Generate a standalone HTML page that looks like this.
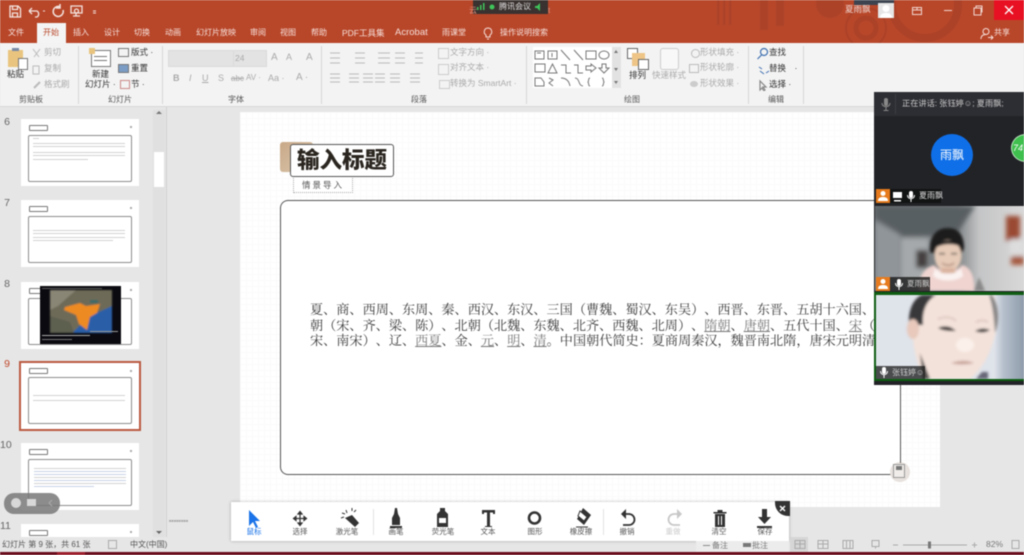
<!DOCTYPE html>
<html><head><meta charset="utf-8"><style>
html,body{margin:0;padding:0;width:1024px;height:555px;overflow:hidden;background:#e6e6e6}
body{font-family:"Liberation Sans","Noto Sans CJK SC",sans-serif;color:#444}
#w{position:absolute;left:0;top:0;width:1024px;height:555px;overflow:hidden;filter:blur(.4px);background:#e6e6e6}
.a{position:absolute}
.t{position:absolute;white-space:nowrap;font-size:8.5px;line-height:11px;color:#555}
.tab{position:absolute;top:27px;white-space:nowrap;font-size:8px;line-height:12px;color:#f6ded8}
.g{color:#aaa}
.grp{position:absolute;top:95px;font-size:8px;line-height:10px;color:#555;white-space:nowrap}
.sep{position:absolute;top:46px;height:58px;width:1px;background:#d6d6d6}
.th{position:absolute;left:21px;width:118px;height:67px;background:#fff}
.th i{position:absolute;left:8px;top:6px;width:19px;height:6px;border:1px solid #777;border-radius:1px;box-sizing:border-box}
.th b{position:absolute;left:7px;top:16px;width:104px;height:47px;border:1px solid #8c8c8c;border-radius:2px;box-sizing:border-box}
.th u{position:absolute;right:7px;top:7px;width:2px;height:2px;background:#aaa}
.num{position:absolute;left:0;width:10px;text-align:right;font-size:10.5px;color:#666}
.ln{position:absolute;height:1px;background:#d2d2d2}
.tl{position:absolute;top:527px;font-size:7.5px;line-height:10px;color:#555;transform:translateX(-50%);white-space:nowrap}
.body{font-family:"Liberation Serif","Noto Serif CJK SC",serif;font-size:13.15px;line-height:15.5px;color:#3a3a3a;white-space:nowrap;text-spacing-trim:space-all}
.body span{text-decoration:underline;color:#777}
</style></head><body><div id="w">
<!-- title bar -->
<div class="a" style="left:0;top:0;width:1024px;height:43px;background:#b8472a"></div>
<svg class="a" style="left:700px;top:0" width="324" height="43">
<g fill="none" stroke="#ac4228"><circle cx="225" cy="5" r="33" stroke-width="8"/><circle cx="166" cy="28" r="10" stroke-width="5"/><circle cx="166" cy="28" r="20" stroke-width="2"/></g>
<g fill="#ac4329"><rect x="17" y="0" width="2.500" height="25"/><rect x="23" y="0" width="2.500" height="25"/><rect x="29" y="0" width="2.500" height="25"/><rect x="60" y="0" width="8" height="30"/><rect x="76" y="0" width="8" height="26"/><circle cx="130" cy="4" r="14"/></g>
<rect x="154" y="0" width="40" height="5" fill="#3d4450"/>
</svg>
<svg class="a" style="left:0;top:0" width="110" height="22" fill="none" stroke="#f4e4df" stroke-width="1.300">
<path d="M10 6h8l2.500 2.500V17H10zM12.500 6v3.500h5V6M12.500 17v-4h5v4"/>
<path d="M29 11h8a3.500 3.500 0 0 1 0 6h-2M29 11l3-3M29 11l3 3"/>
<path d="M43 11h2" stroke-width="1"/>
<path d="M60.500 7a5 5 0 1 0 2.500 3M60 4v4h-4" stroke-width="1.500"/>
<path d="M71 6h11v7H71zM76 13v3M73 16h7"/><circle cx="76.500" cy="11" r="2"/>
<path d="M93 11h3M93 13h3" stroke-width="1"/></svg>
<div class="a" style="left:473px;top:0;width:75px;height:14px;background:#3a3230"></div>
<svg class="a" style="left:476px;top:1px" width="72" height="12"><g fill="#3fc45a"><rect x="1" y="6" width="1.500" height="3"/><rect x="4" y="4" width="1.500" height="5"/><rect x="7" y="2" width="1.500" height="7"/><circle cx="16" cy="6" r="2.500"/><path d="M59 5h2l3-3v8l-3-3h-2z"/></g></svg>
<div class="t" style="left:499px;top:1px;color:#ddd;font-size:8px">腾讯会议</div>
<div class="t" style="left:548px;top:5px;color:#d98f7c;font-size:8px">t</div>
<div class="t" style="left:469px;top:5px;color:#d98f7c;font-size:8px">云</div>
<div class="t" style="left:845px;top:4px;color:#f0d8d2;font-size:8.5px">夏雨飘</div>
<div class="a" style="left:878px;top:3px;width:16px;height:15px;background:#e6e6e6"></div>
<svg class="a" style="left:878px;top:3px" width="16" height="15"><circle cx="8" cy="5.500" r="3.500" fill="#fff"/><path d="M2 15c0-4 3-5 6-5s6 1 6 5z" fill="#fff"/></svg>
<svg class="a" style="left:905px;top:0" width="119" height="22" fill="none" stroke="#f0d6ce"><path d="M7.500 7.500h9v7h-9zM7.500 10h9M12 7.500V10"/><path d="M39 10.500h8"/><path d="M69 8h7v7h-7zM71 8V6h6v6h-1"/></svg>
<div class="a" style="left:994px;top:0;width:30px;height:20px;background:#e81123"></div>
<svg class="a" style="left:994px;top:0" width="30" height="20" stroke="#fff" stroke-width="1.300"><path d="M11 6l8 8M19 6l-8 8"/></svg>
<!-- tabs -->
<div class="a" style="left:37px;top:23px;width:29px;height:21px;background:#f4f4f4"></div>
<div class="tab" style="left:8px">文件</div>
<div class="tab" style="left:43px;color:#b8472a">开始</div>
<div class="tab" style="left:73px">插入</div>
<div class="tab" style="left:104px">设计</div>
<div class="tab" style="left:134px">切换</div>
<div class="tab" style="left:165px">动画</div>
<div class="tab" style="left:196px">幻灯片放映</div>
<div class="tab" style="left:250px">审阅</div>
<div class="tab" style="left:280px">视图</div>
<div class="tab" style="left:311px">帮助</div>
<div class="tab" style="left:342px;font-size:8.500px">PDF工具集</div>
<div class="tab" style="left:395px;font-size:9.500px">Acrobat</div>
<div class="tab" style="left:442px">雨课堂</div>
<svg class="a" style="left:482px;top:27px" width="12" height="13" fill="none" stroke="#f6ded8"><path d="M6 1a3.800 3.800 0 0 0-2 7v2h4V8a3.800 3.800 0 0 0-2-7zM5 12h2"/></svg>
<div class="tab" style="left:500px">操作说明搜索</div>
<svg class="a" style="left:980px;top:27px" width="14" height="13" fill="none" stroke="#f6ded8"><circle cx="6" cy="4.500" r="3"/><path d="M1 12c0-3 2-4.500 5-4.500M8 10.500h5M11 8.500l2 2-2 2"/></svg>
<div class="tab" style="left:994px">共享</div>
<!-- ribbon -->
<div class="a" style="left:0;top:43px;width:1024px;height:63px;background:#f3f3f3"></div>
<div class="a" style="left:0;top:106px;width:1024px;height:1px;background:#d8d8d8"></div>
<div class="sep" style="left:78px"></div><div class="sep" style="left:162px"></div><div class="sep" style="left:321px"></div><div class="sep" style="left:526px"></div><div class="sep" style="left:748px"></div><div class="sep" style="left:803px"></div>
<div class="grp" style="left:19px">剪贴板</div><div class="grp" style="left:108px">幻灯片</div><div class="grp" style="left:228px">字体</div><div class="grp" style="left:411px">段落</div><div class="grp" style="left:624px">绘图</div><div class="grp" style="left:768px">编辑</div>
<!-- clipboard -->
<div class="a" style="left:8px;top:50px;width:15px;height:17px;background:#e8c47e"></div><div class="a" style="left:12px;top:48px;width:7px;height:3px;background:#7a8aa5"></div><div class="a" style="left:18px;top:58px;width:8px;height:10px;background:#fff;border:1px solid #777"></div>
<div class="t" style="left:7px;top:69px;color:#333">粘贴</div>
<div class="t g" style="left:44px;top:47px">剪切</div><div class="t g" style="left:44px;top:63px">复制</div><div class="t g" style="left:44px;top:79px">格式刷</div>
<svg class="a" style="left:31px;top:48px" width="12" height="42" fill="none" stroke="#bbb"><path d="M2 1l6 8M9 1l-6 8M2 18h6v8H2z"/><path d="M3 40l6-6" stroke-width="2"/></svg>
<!-- slides -->
<div class="a" style="left:91px;top:50px;width:18px;height:15px;background:#fff;border:1px solid #777"></div><div class="ln" style="left:94px;top:56px;width:13px;background:#777"></div><div class="ln" style="left:94px;top:60px;width:13px;background:#777"></div><div class="a" style="left:89px;top:48px;width:6px;height:6px;background:#e8c47e"></div>
<div class="t" style="left:92px;top:69px;color:#333">新建</div><div class="t" style="left:85px;top:79px;color:#333">幻灯片 ·</div>
<div class="a" style="left:118px;top:48px;width:9px;height:7px;border:1px solid #777"></div><div class="t" style="left:131px;top:47px;color:#333">版式 ·</div>
<div class="a" style="left:118px;top:64px;width:9px;height:7px;border:1px solid #777;background:#7a9cc5"></div><div class="t" style="left:131px;top:63px;color:#333">重置</div>
<div class="a" style="left:120px;top:80px;width:8px;height:7px;border:1px solid #c88"></div><div class="t" style="left:131px;top:79px;color:#333">节 ·</div>
<!-- font -->
<div class="a" style="left:168px;top:50px;width:64px;height:15px;background:#e3e3e3;border:1px solid #dadada"></div><div class="a" style="left:233px;top:50px;width:32px;height:15px;background:#e3e3e3;border:1px solid #dadada"></div>
<div class="t g" style="left:235px;top:53px">24</div>
<div class="t g" style="left:271px;top:52px;font-size:10px">A</div><div class="t g" style="left:286px;top:52px;font-size:9px">A</div><div class="t g" style="left:306px;top:52px;font-size:10px">A</div>
<div class="t g" style="left:173px;top:73px;font-size:9px;font-weight:bold">B</div><div class="t g" style="left:189px;top:73px;font-size:9px;font-style:italic">I</div><div class="t g" style="left:202px;top:73px;font-size:9px;text-decoration:underline">U</div><div class="t g" style="left:218px;top:73px;font-size:9px">S</div><div class="t g" style="left:231px;top:73px;font-size:8px;text-decoration:line-through">abc</div><div class="t g" style="left:246px;top:72px;font-size:8px">AV ·</div><div class="t g" style="left:268px;top:73px;font-size:9px">Aa ·</div><div class="t g" style="left:296px;top:72px;font-size:10px">A ·</div>
<svg class="a" style="left:328px;top:50px" width="100" height="36" stroke="#bbb" fill="none"><path d="M2 3h10M2 8h10M2 13h10M27 3h10M27 8h10M27 13h10M50 3h12M50 8h12M50 13h12M67 3h10M67 8h10M67 13h10M87 3h8M87 8h8M87 13h8M2 24h10M2 28h10M2 32h10M21 24h10M21 28h10M21 32h10M35 24h10M35 28h10M35 32h10M47 24h10M47 28h10M47 32h10M62 24h10M62 28h10M62 32h10M82 24h10M82 28h10M82 32h10"/></svg>
<div class="t g" style="left:450px;top:47px">文字方向 ·</div><div class="t g" style="left:450px;top:62px">对齐文本 ·</div><div class="t g" style="left:450px;top:78px">转换为 SmartArt ·</div>
<div class="a" style="left:438px;top:48px;width:9px;height:9px;border:1px solid #ccc"></div><div class="a" style="left:438px;top:64px;width:9px;height:9px;border:1px solid #ccc"></div><div class="a" style="left:439px;top:80px;width:9px;height:7px;border:1px solid #ccc"></div>
<!-- shapes -->
<div class="a" style="left:533px;top:47px;width:79px;height:41px;background:#fff"></div><div class="a" style="left:612px;top:47px;width:9px;height:41px;background:#e2e2e2"></div>
<svg class="a" style="left:534px;top:47px" width="88" height="41" fill="none" stroke="#777"><path d="M1 4h9v8H1zM3 6h4M14 4h9v8h-9zM18 6v4M27 3l9 10M40 3l9 10M52 4h10v8H52z"/><ellipse cx="70" cy="8" rx="5" ry="4"/><path d="M1 17h10v8H1zM14 26l4.500-9 4.500 9zM27 18h5v8h5M40 18h4v8h5M52 19h5v-2l5 4-5 4v-2h-5zM68 17h4v4h3l-5 5-5-5h3zM1 31h6l3 4v4H1zM15 31l4 2-4 3 4 3M27 31c5 0 8 3 9 8M41 31c5 0 3 8 8 8M56 31c-2 0-1 3-2 4 1 1 0 4 2 4M68 31c2 0 1 3 2 4-1 1 0 4-2 4"/><path d="M80 6h4l-2-3zM80 21h4l-2 3zM80 34h4l-2 3z" fill="#777" stroke="none"/></svg>
<div class="a" style="left:627px;top:48px;width:9px;height:9px;border:1px solid #666;background:#fff"></div><div class="a" style="left:632px;top:53px;width:13px;height:13px;background:#eec587"></div><div class="a" style="left:638px;top:59px;width:9px;height:9px;border:1px solid #666;background:#fff"></div>
<div class="t" style="left:629px;top:70px;color:#333">排列</div>
<div class="a" style="left:660px;top:48px;width:17px;height:20px;border:1px solid #ccc;border-radius:3px;background:#f8f8f8"></div><div class="t g" style="left:652px;top:70px">快速样式</div>
<div class="t g" style="left:700px;top:47px">形状填充 ·</div><div class="t g" style="left:700px;top:62px">形状轮廓 ·</div><div class="t g" style="left:700px;top:78px">形状效果 ·</div>
<div class="a" style="left:691px;top:49px;width:7px;height:7px;border:1px solid #bbb;border-radius:50%"></div><div class="a" style="left:689px;top:64px;width:8px;height:7px;border:1px solid #bbb"></div><div class="a" style="left:690px;top:81px;width:8px;height:6px;background:#ccc;border-radius:50%"></div>
<!-- edit -->
<svg class="a" style="left:756px;top:47px" width="14" height="44" fill="none" stroke="#3f6fb0" stroke-width="1.200"><circle cx="8" cy="5" r="3.500"/><path d="M5.500 8l-4 4"/><path d="M3 20l3 2M10 26l3-2M4 24l4 3" stroke-width="1"/><path d="M4 34v9l2-2 2 3 1-1-2-3h3z" stroke="#888"/></svg>
<div class="t" style="left:769px;top:47px;color:#333">查找</div><div class="t" style="left:769px;top:63px;color:#333">替换　·</div><div class="t" style="left:769px;top:79px;color:#333">选择 ·</div>
<!-- left pane -->
<div class="a" style="left:166px;top:107px;width:1px;height:430px;background:#d0d0d0"></div>
<div class="a" style="left:153px;top:110px;width:12px;height:427px;background:#e0e0e0"></div>
<div class="a" style="left:154px;top:152px;width:10px;height:35px;background:#fff"></div>
<div class="a" style="left:156px;top:111px;border:3px solid transparent;border-bottom:3px solid #777;border-top:0"></div>
<div class="a" style="left:156px;top:531px;border:3px solid transparent;border-top:3px solid #666;border-bottom:0"></div>
<div class="num" style="top:116px">6</div><div class="num" style="top:197px">7</div><div class="num" style="top:278px">8</div><div class="num" style="top:358px;color:#c0492b">9</div><div class="num" style="top:439px">10</div><div class="num" style="top:520px">11</div>
<div class="th" style="top:119px"><i></i><b></b><u></u>
<div class="ln" style="left:12px;top:19px;width:6px"></div><div class="ln" style="left:12px;top:24px;width:92px"></div><div class="ln" style="left:12px;top:27px;width:92px"></div><div class="ln" style="left:12px;top:33px;width:92px"></div><div class="ln" style="left:12px;top:36px;width:92px"></div><div class="ln" style="left:12px;top:40px;width:55px"></div></div>
<div class="th" style="top:200px"><i></i><b></b><u></u>
<div class="ln" style="left:12px;top:30px;width:92px"></div><div class="ln" style="left:12px;top:33px;width:92px"></div><div class="ln" style="left:12px;top:37px;width:92px"></div><div class="ln" style="left:12px;top:40px;width:80px"></div></div>
<div class="th" style="top:282px"><i></i><b></b><u></u></div>
<svg class="a" style="left:40px;top:286px" width="81" height="58"><defs><filter id="bl"><feGaussianBlur stdDeviation="0.800"/></filter></defs><rect width="81" height="58" fill="#0a0a10"/><g filter="url(#bl)"><rect x="10" y="4" width="62" height="43" fill="#6e6b58"/><path d="M10 4h26L18 20l-8 4z" fill="#8a8676"/><path d="M32 47L50 30l22-10v27z" fill="#2c5ea8"/><path d="M10 30l20 6 4 11H10z" fill="#5d5f50"/><path d="M25 21l15-4 6 3 14-2-3 9-7 4-3 13-8-6-3-9-12-5z" fill="#ee8a22"/><rect x="50" y="14" width="8" height="3" fill="#3d6a66"/></g><rect x="2" y="49" width="48" height="1" fill="#aaa"/><rect x="2" y="53" width="30" height="1" fill="#777"/><rect x="50" y="45" width="28" height="1" fill="#999"/><rect x="2" y="2" width="60" height="1" fill="#555"/></svg>
<div class="th" style="top:363px;height:66px;outline:2px solid #bb5a42"><i style="top:5px"></i><b style="top:14px"></b><u></u>
<div class="ln" style="left:12px;top:32px;width:92px"></div><div class="ln" style="left:12px;top:37px;width:92px"></div></div>
<div class="th" style="top:443px"><i></i><b></b><u></u>
<div class="ln" style="left:13px;top:25px;width:92px"></div><div class="ln" style="left:13px;top:28px;width:92px;background:#c8d2e6"></div><div class="ln" style="left:13px;top:31px;width:92px;background:#c8d2e6"></div><div class="ln" style="left:13px;top:34px;width:92px"></div><div class="ln" style="left:13px;top:37px;width:92px;background:#c8d2e6"></div><div class="ln" style="left:13px;top:40px;width:92px"></div><div class="ln" style="left:13px;top:43px;width:60px;background:#c8d2e6"></div></div>
<div class="th" style="top:524px;height:13px"><i></i><u></u></div>
<div class="a" style="left:4px;top:493px;width:56px;height:21px;background:rgba(120,120,120,.85);border-radius:10px"></div>
<svg class="a" style="left:4px;top:493px" width="56" height="21"><circle cx="12" cy="10" r="5" fill="#d8d8d8"/><rect x="23" y="6" width="9" height="7" fill="#d8d8d8"/><path d="M48 7l-3 3 3 3" stroke="#aaa" fill="none"/></svg>
<!-- slide -->
<div class="a" style="left:240px;top:112px;width:700px;height:395px;background:#fff;background-image:linear-gradient(#fafafa 1px,transparent 1px),linear-gradient(90deg,#fafafa 1px,transparent 1px);background-size:6px 6px;overflow:hidden"></div>
<div class="a" style="left:280px;top:142px;width:33px;height:30px;background:linear-gradient(135deg,#c8a988,#dcc6ac);border-radius:3px"></div>
<div class="a" style="left:293px;top:176px;width:60px;height:17px;background:#fff;border:1px dotted #aaa;box-sizing:border-box;text-align:center;font-size:8.5px;line-height:16px;letter-spacing:2px;color:#555">情景导入</div>
<div class="a" style="left:290px;top:144px;width:104px;height:33px;background:#fff;border:1px solid #555;border-radius:3px;box-sizing:border-box;text-align:center;font-size:22.500px;line-height:31px;font-weight:900;color:#2b2620;font-family:'Liberation Sans','Noto Sans CJK SC',sans-serif">输入标题</div>
<div class="a" style="left:280px;top:200px;width:621px;height:275px;background:#fff;border:1.500px solid #555;border-radius:8px;box-sizing:border-box"></div>
<div class="a body" style="left:310px;top:302px;width:564px;overflow:hidden">夏、商、西周、东周、秦、西汉、东汉、三国（曹魏、蜀汉、东吴）、西晋、东晋、五胡十六国、<br>朝（宋、齐、梁、陈）、北朝（北魏、东魏、北齐、西魏、北周）、<span>隋朝</span>、<span>唐朝</span>、五代十国、<span>宋</span>（<br>宋、南宋）、辽、<span>西夏</span>、金、<span>元</span>、<span>明</span>、<span>清</span>。中国朝代简史：夏商周秦汉，魏晋南北隋，唐宋元明清</div>
<div class="a" style="left:890px;top:462px;width:20px;height:20px;background:#e8e2de;border-radius:50%"></div>
<div class="a" style="left:893px;top:464px;width:12px;height:14px;background:#efece9;border:1px solid #999;box-sizing:border-box"></div>
<div class="a" style="left:896px;top:466px;width:6px;height:4px;background:#777"></div>
<div class="a" style="left:169px;top:518px;font-size:4px;color:#aaa;line-height:5px">■■■■■■■■</div>
<!-- toolbar -->
<div class="a" style="left:231px;top:502px;width:558px;height:39px;background:#fff;box-shadow:0 0 3px rgba(0,0,0,.3)"></div>
<div class="a" style="left:373px;top:509px;width:1px;height:26px;background:#e2e2e2"></div><div class="a" style="left:603px;top:509px;width:1px;height:26px;background:#e2e2e2"></div>
<svg class="a" style="left:231px;top:502px" width="558" height="28">
<path d="M18 8v16l4-4 3 6 2-1-3-6h5z" fill="#1a73e8"/>
<g stroke="#333" fill="#333" stroke-width="1.200"><path d="M69 11v11M64 16.500h11"/><path d="M69 9.500l-2 2.500h4zM69 23.500l-2-2.500h4zM62.500 16.500l2.500-2v4zM75.500 16.500l-2.500-2v4z"/></g>
<path d="M114 16l7-3 7 8-4 4z" fill="#333"/><path d="M115 8l1 3M111 11l3 1M121 6v3M125 8l-2 2M110 16l3-1" stroke="#333"/>
<path d="M164 6h2l1 6 2 4v7h-8v-7l2-4z" fill="#333"/><rect x="159" y="24" width="12" height="2" fill="#333"/>
<path d="M209 6h5v3l3 3v13h-11V12l3-3z" fill="#333"/><rect x="208" y="16" width="7" height="5" fill="#fff"/>
<path d="M251 8h13v4h-2v-1.500h-3V24h2v1h-7v-1h2V10.500h-3V12h-2z" fill="#333"/>
<circle cx="303.500" cy="16" r="5.500" fill="none" stroke="#333" stroke-width="2.600"/>
<path d="M352 6l8 7-7 10-7-6z" fill="#333"/><path d="M349 9l7 6-3 4-6-5z" fill="#fff" stroke="#333"/><path d="M345 25h12" stroke="#333"/>
<path d="M392 12h6a5 5 0 0 1 0 11h-6" fill="none" stroke="#333" stroke-width="1.800"/><path d="M395 7l-5 5 5 5z" fill="#333"/>
<path d="M449 12h-6a5 5 0 0 0 0 11h6" fill="none" stroke="#c8c8c8" stroke-width="1.800"/><path d="M446 7l5 5-5 5z" fill="#c8c8c8"/>
<path d="M484 12h10v13h-10zM482.500 10h13v1.500h-13zM486.500 8h5v2h-5z" fill="#333"/><path d="M487.500 14v9M490.500 14v9" stroke="#fff"/>
<path d="M531 7h5v8h4l-6.500 7-6.500-7h4zM526 24h15v2h-15z" fill="#333"/>
</svg>
<div class="tl" style="left:254px;color:#1a73e8">鼠标</div><div class="tl" style="left:300px">选择</div><div class="tl" style="left:347px">激光笔</div><div class="tl" style="left:396px">画笔</div><div class="tl" style="left:443px">荧光笔</div><div class="tl" style="left:488px">文本</div><div class="tl" style="left:535px">图形</div><div class="tl" style="left:581px">橡皮擦</div><div class="tl" style="left:627px">撤销</div><div class="tl" style="left:673px;color:#ccc">重做</div><div class="tl" style="left:719px">清空</div><div class="tl" style="left:765px">保存</div>
<svg class="a" style="left:775px;top:501px" width="15" height="15"><path d="M0 0h15v15H13A13 13 0 0 1 0 2z" fill="#333"/><path d="M5 5l5 5M10 5l-5 5" stroke="#fff" stroke-width="1.400"/></svg>
<!-- status -->
<div class="a" style="left:0;top:552px;width:1024px;height:3px;background:#6b0c1c"></div>
<div class="a" style="left:57px;top:552px;width:28px;height:3px;background:#9c1e2c"></div>
<div class="a" style="left:696px;top:541px;width:93px;height:11px;background:#ececec"></div>
<div class="t" style="left:2px;top:539px;font-size:8px">幻灯片 第 9 张，共 61 张</div>
<div class="t" style="left:130px;top:539px;font-size:8px">中文(中国)</div>
<div class="a" style="left:108px;top:540px;width:7px;height:7px;border:1px solid #aaa"></div>
<div class="t" style="left:712px;top:540px;font-size:8px;color:#777">备注</div><div class="t" style="left:752px;top:540px;font-size:8px;color:#777">批注</div>
<div class="a" style="left:703px;top:545px;width:7px;height:1px;background:#888"></div><div class="a" style="left:743px;top:543px;width:8px;height:4px;background:#777"></div>
<div class="a" style="left:790px;top:537px;width:18px;height:15px;background:#d6d6d6"></div>
<svg class="a" style="left:790px;top:539px" width="234" height="12" fill="none" stroke="#aaa"><path d="M5 1.500h10v8H5zM5 5h10M10 1.500v8M28 1.500h10v8H28zM28 5h10M33 1.500v8M53 1.500h10v8H53zM56.500 1.500v8M60 1.500v8M82 1.500h7v6H82zM85.500 7.500v2"/><path d="M103 6h5M113 6h64M182 6h5M184.500 3.500v5" stroke-width="1"/><rect x="138" y="2.500" width="3" height="7" fill="#777" stroke="none"/><rect x="222" y="1.500" width="7" height="8"/></svg>
<div class="t" style="left:986px;top:539px;font-size:8.5px;color:#777">82%</div>
<!-- meeting panel -->
<div class="a" style="left:874px;top:92px;width:150px;height:293px;background:#222327;overflow:hidden">
<div class="a" style="left:0;top:0;width:150px;height:24px;background:#2d2e33"></div>
<div class="a" style="left:21px;top:2px;width:1px;height:20px;background:#3c3d42"></div>
<svg class="a" style="left:7px;top:5px" width="10" height="15" fill="#888"><rect x="3" y="1" width="4" height="8" rx="2"/><path d="M1 6c0 5 8 5 8 0M5 10v3M2.500 13.500h5" fill="none" stroke="#888"/></svg>
<div class="a" style="left:28px;top:6px;font-size:8.2px;line-height:12px;color:#c9c9c9;white-space:nowrap">正在讲话: 张钰婷&#9786;; 夏雨飘;</div>
<div class="a" style="left:57px;top:42px;width:42px;height:42px;border-radius:50%;background:#0f6fe8;color:#fff;font-size:12px;line-height:42px;text-align:center">雨飘</div>
<div class="a" style="left:137px;top:42px;width:26px;height:26px;border-radius:50%;background:#3fbf4e;border:1px solid #bde5c0;color:#fff;font-size:9px;line-height:26px;padding-left:1px;font-style:italic">74</div>
<div class="a" style="left:16px;top:97px;width:51px;height:14px;background:rgba(15,15,15,.8)"></div>
<div class="a" style="left:2px;top:97px;width:14px;height:14px;background:#e67a1c"></div>
<svg class="a" style="left:2px;top:97px" width="42" height="14"><circle cx="7" cy="4.500" r="2.500" fill="#fff"/><path d="M2 12c0-3 2-4 5-4s5 1 5 4z" fill="#fff"/><rect x="17" y="3" width="9" height="6" fill="#fff"/><rect x="18" y="11" width="7" height="1.500" fill="#fff"/><rect x="33" y="2" width="4" height="7" rx="2" fill="#fff"/><path d="M31.500 6c0 5 7 5 7 0M35 10v3" fill="none" stroke="#fff"/></svg>
<div class="a" style="left:45px;top:97px;font-size:8px;line-height:14px;color:#ddd;white-space:nowrap">夏雨飘</div>
<svg class="a" style="left:1px;top:114px" width="149" height="85"><defs><filter id="b1"><feGaussianBlur stdDeviation="2.500"/></filter><filter id="b2"><feGaussianBlur stdDeviation="1.300"/></filter><linearGradient id="w1" x1="0" x2="1"><stop offset="0" stop-color="#6f7578"/><stop offset=".55" stop-color="#7f8385"/><stop offset=".7" stop-color="#c4c5c6"/><stop offset="1" stop-color="#d9d8d8"/></linearGradient></defs><rect width="149" height="85" fill="url(#w1)"/><g filter="url(#b1)"><path d="M0 0h100L80 30H28L0 12z" fill="#585f62"/><path d="M0 15l25 14v56H0z" fill="#90959a"/><rect x="26" y="32" width="28" height="53" fill="#a5a9ab"/><rect x="41" y="44" width="12" height="18" fill="#45403f"/><rect x="131" y="10" width="14" height="25" fill="#9a4a30"/><rect x="135" y="33" width="14" height="18" fill="#ddd"/><rect x="136" y="50" width="13" height="9" fill="#a5583d"/></g><g filter="url(#b2)"><path d="M99 85l5-14 6 14z" fill="#888"/><path d="M55 46c-1-18 8-24 18-24 10 0 16 7 16 20-1 4-3 6-4 6H60z" fill="#1f1d1d"/><ellipse cx="73" cy="50" rx="13.500" ry="16" fill="#e6cbb8"/><path d="M60 42c4-9 20-11 27-1-8-4-19-4-27 1z" fill="#1f1d1d"/><path d="M44 85c-1-14 4-22 15-26 6 8 22 8 28 0 9 2 13 12 12 26z" fill="#f0d4d0"/><path d="M60 62c6 8 20 8 26 0l2 8c-8 6-22 6-30 0z" fill="#faf3f1"/><rect x="66" y="62" width="14" height="5" fill="#d9b39e"/><path d="M67 57c4 3 9 3 12 0" stroke="#8e5a4c" fill="none"/><rect x="64" y="47" width="6" height="1.500" fill="#333"/><rect x="76" y="47" width="6" height="1.500" fill="#333"/></g></svg>
<div class="a" style="left:2px;top:185px;width:54px;height:14px;background:rgba(25,25,25,.8)"></div>
<div class="a" style="left:2px;top:185px;width:14px;height:14px;background:#e67a1c"></div>
<svg class="a" style="left:2px;top:185px" width="30" height="14"><circle cx="7" cy="4.500" r="2.500" fill="#fff"/><path d="M2 12c0-3 2-4 5-4s5 1 5 4z" fill="#fff"/><rect x="21" y="2" width="4" height="7" rx="2" fill="#fff"/><path d="M19.500 6c0 5 7 5 7 0M23 10v3" fill="none" stroke="#fff"/></svg>
<div class="a" style="left:33px;top:185px;font-size:7.500px;line-height:14px;color:#ccc;white-space:nowrap">夏雨飘</div>
<div class="a" style="left:0;top:200px;width:150px;height:89px;background:#0e5d12"></div>
<svg class="a" style="left:2px;top:203px" width="148" height="84"><defs><linearGradient id="w2" x1="0" x2="1"><stop offset="0" stop-color="#dfe3ea"/><stop offset=".8" stop-color="#dfe3ea"/><stop offset=".86" stop-color="#b6c0cc"/><stop offset="1" stop-color="#8f9cab"/></linearGradient></defs><rect width="148" height="84" fill="url(#w2)"/><g filter="url(#b2)"><path d="M48 84C40 66 36 50 37 34 38 14 42 0 50 0h68c5 16 4 34-2 50-4 14-14 28-22 34z" fill="#f3e2da"/><path d="M33 30C32 14 38 3 46 0h14C50 6 46 16 47 30z" fill="#39373a"/><path d="M116 0c7 10 8 26 3 38-1-14-2-26-6-38z" fill="#8a8888"/><ellipse cx="37" cy="34" rx="6" ry="10" fill="#e8c9bc"/><path d="M62 33c6-3 13-2 18 3-6 0-13 0-18-3zM99 36c5-3 10-3 15-1-5 3-10 3-15 1z" fill="#3b3434"/><path d="M62 24c7-3 14-2 18 2M100 27c4-2 9-2 12 0" stroke="#c9aca2" fill="none"/><ellipse cx="89" cy="50" rx="9" ry="7" fill="#fbf0ea"/><path d="M75 68c8-3 17-3 23 0-7 2-17 2-23 0z" fill="#cba89f"/><path d="M44 58l10 26h-7z" fill="#55504e"/><path d="M100 84l6-7h6v7z" fill="#667"/></g></svg>
<div class="a" style="left:2px;top:274px;width:49px;height:13px;background:rgba(25,25,25,.75)"></div>
<svg class="a" style="left:4px;top:274px" width="12" height="14"><rect x="4" y="1" width="4" height="7" rx="2" fill="#fff"/><path d="M2.500 5c0 5 7 5 7 0M6 9v3" fill="none" stroke="#fff"/></svg>
<div class="a" style="left:18px;top:274px;font-size:8px;line-height:13px;color:#ccc;white-space:nowrap">张钰婷&#9786;</div>
</div>
<div class="a" style="left:900px;top:385px;width:1px;height:78px;background:#555"></div>
</div></body></html>
